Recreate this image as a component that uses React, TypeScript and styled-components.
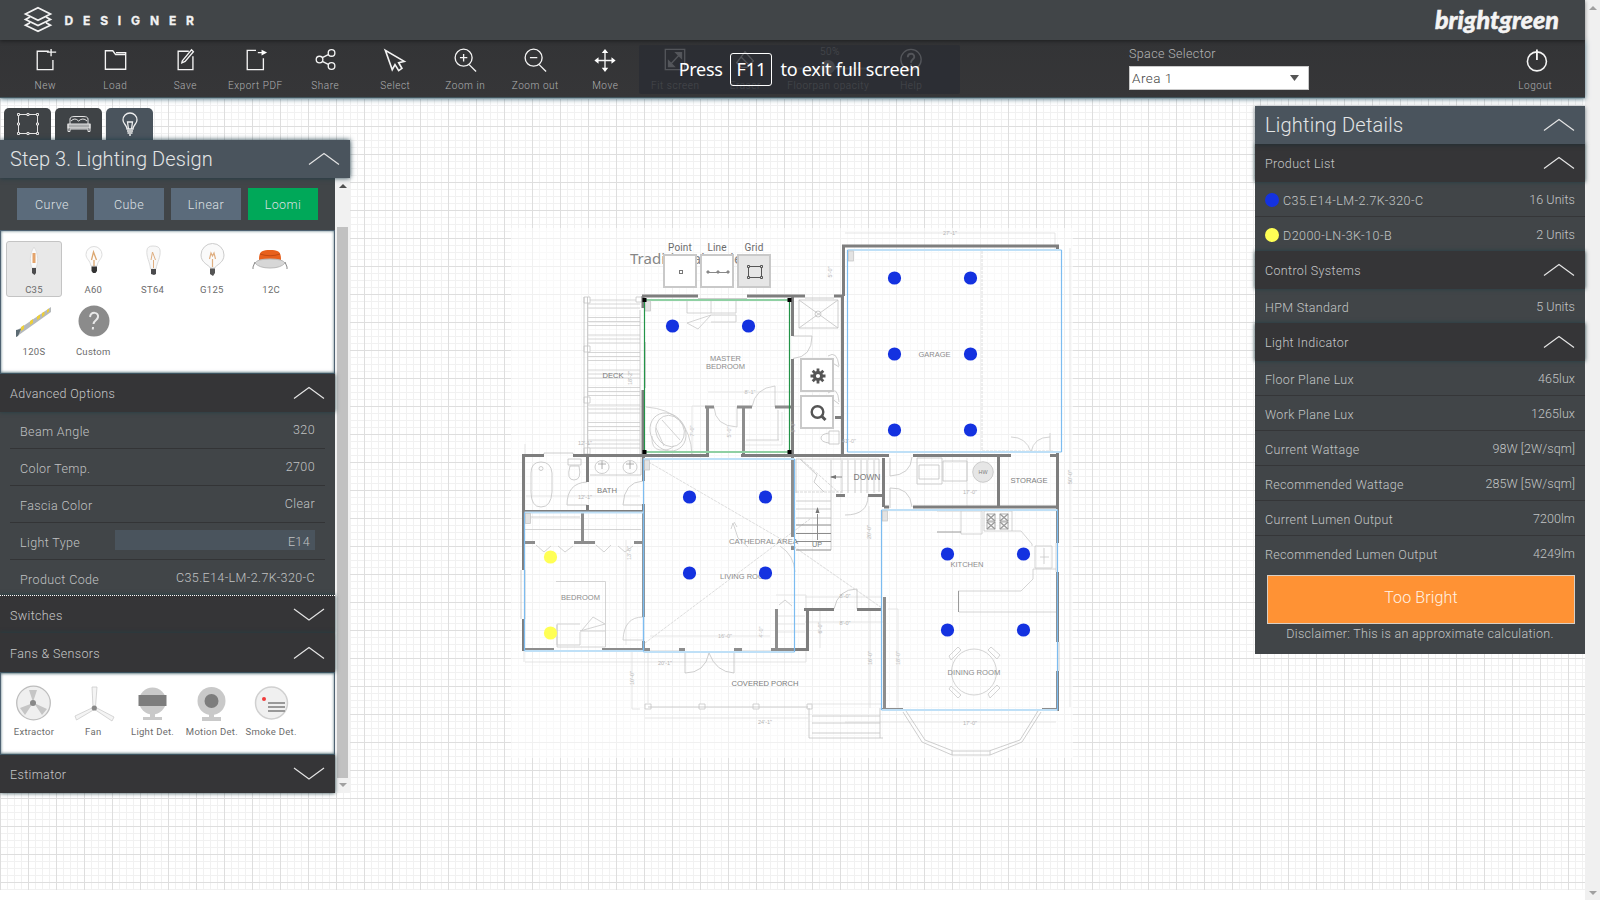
import React from "react";
import styled, { createGlobalStyle } from "styled-components";

const Global = createGlobalStyle`
  * { box-sizing: border-box; }
  html, body { margin: 0; padding: 0; background: #fff; overflow: hidden; }
  body { font-family: Roboto, "Liberation Sans", sans-serif; font-weight: 300; }
  svg { display: block; overflow: visible; }
`;

const Page = styled.div`
  width: 1600px; height: 900px; display: flex; overflow: hidden; background: #fff;
`;
const Main = styled.div`
  width: 1585px; height: 900px; display: flex; flex-direction: column; position: relative;
`;
const PageScroll = styled.div`
  width: 15px; height: 900px; background: #f0f0f0; display: flex; flex-direction: column;
  justify-content: space-between; align-items: center; padding: 6px 0 5px;
`;
const Header = styled.header`
  height: 40px; flex: none; background: #414548; display: flex; justify-content: space-between;
  padding: 0 24px 0 22px; position: relative; z-index: 3; box-shadow: 0 1px 4px rgba(0,0,0,.45);
`;
const Toolbar = styled.nav`
  height: 58px; flex: none; background: linear-gradient(#333436, #363638); display: flex; padding-left: 10px;
  position: relative; z-index: 2; border-bottom: 1px solid #43565e; box-shadow: 0 1px 5px #4c7280;
`;
const Tool = styled.div<{ $w?: number }>`
  width: ${p => p.$w ?? 70}px; flex: none; display: flex; flex-direction: column; align-items: center;
  padding-top: 8px; gap: 7px; color: #b0b1b2; font-size: 10px; line-height: 14px; letter-spacing: .55px;
  font-weight: 300; white-space: nowrap; text-indent: .6px;
  svg { height: 24px; margin-left: 1px; }
  &:nth-child(n + 6) svg { margin-left: -1px; }
`;
const SpaceSelector = styled.div`
  width: 180px; margin-left: 183px; padding-top: 6px; color: #b4b5b6; font-size: 12.5px; line-height: 16px; letter-spacing: .37px;
`;
const SelectBox = styled.div`
  height: 24px; margin-top: 4px; background: #fff; border: 1px solid #c9c9c9; display: flex; align-items: center;
  justify-content: space-between; padding: 0 9px 0 2px; font-size: 13.5px; color: #444; letter-spacing: .5px;
`;
const LogoutSlot = styled.div`margin-left: 191px;`;

const FullscreenNotice = styled.div`
  position: absolute; z-index: 5; left: 639px; top: 45px; width: 321px; height: 49px; border-radius: 2px;
  background: rgba(43,45,51,.8); color: #fff; display: flex; justify-content: center; align-items: center; gap: 8px;
  font: 400 18px "Noto Sans", sans-serif; white-space: nowrap; padding-bottom: 1px;
`;
const KeyCap = styled.span`
  width: 42px; height: 33px; border: 1.5px solid #fff; border-radius: 3px; display: flex; align-items: center; justify-content: center;
  font-size: 18px;
`;
const NoticeWord = styled.span<{ $s: number }>`letter-spacing: ${p => p.$s}px;`;

const Stage = styled.main`
  height: 792px; flex: none; position: relative; display: flex; justify-content: space-between; align-items: flex-start;
  background-image:
    linear-gradient(90deg, #dedede 1px, transparent 1px),
    linear-gradient(#dedede 1px, transparent 1px),
    linear-gradient(90deg, #f1f1f1 1px, transparent 1px),
    linear-gradient(#f1f1f1 1px, transparent 1px);
  background-size: 28px 28px, 28px 28px, 7px 7px, 7px 7px;
`;
const Canvas = styled.svg`position: absolute; left: 0; top: 0;`;

const LeftPanel = styled.aside`width: 350px; padding-top: 10px; position: relative;`;
const Tabs = styled.div`display: flex; gap: 4px; padding-left: 4px;`;
const Tab = styled.div<{ $active?: boolean }>`
  width: 47px; height: 32px; border-radius: 5px 5px 0 0; background: ${p => (p.$active ? "#4a545d" : "#3f4346")};
  display: flex; justify-content: center; align-items: center;
`;
const TitleBar = styled.div<{ $shadow?: boolean }>`
  height: 38px; background: #4a545d; color: #e3e5e6; display: flex; justify-content: space-between; align-items: center;
  padding: 0 10px; font-size: 20px; letter-spacing: ${p => (p.$shadow ? ".1px" : ".22px")}; position: relative; z-index: 2;
  box-shadow: ${p => (p.$shadow ? "0 0 5px #1f3c48" : "0 1px 4px rgba(20,40,48,.6)")};
`;
const ScrollRow = styled.div`display: flex; height: 615px;`;
const ScrollBody = styled.div`width: 335px; background: #414548;`;
const ScrollTrack = styled.div`
  width: 15px; height: 615px; background: #f1f1f1; display: flex; flex-direction: column; align-items: center;
  padding: 6px 0 6px;
`;
const Thumb = styled.div`width: 11px; height: 551px; background: #c1c1c1; margin: 39px 0 5px;`;

const Families = styled.div`display: flex; gap: 7px; padding: 10px 17px; height: 52px;`;
const Family = styled.div<{ $on?: boolean }>`
  width: 70px; height: 32px; display: flex; align-items: center; justify-content: center; font-size: 12.5px; letter-spacing: .45px;
  font-weight: 300; color: #dde0e3; background: ${p => (p.$on ? "#00a859" : "#5b6b7b")};
`;
const Swatches = styled.div<{ $h: number; $top: number }>`
  height: ${p => p.$h}px; background: #fff; border: 1px solid #4f6272; padding: ${p => p.$top}px 5px 0;
  display: flex; flex-wrap: wrap; align-content: flex-start; column-gap: 3.3px; row-gap: 6px;
  box-shadow: inset 0 0 3px #53727c;
`;
const Swatch = styled.div<{ $on?: boolean }>`
  width: 56px; height: 56px; border-radius: 3px; border: 1px solid ${p => (p.$on ? "#c4c4c4" : "transparent")};
  background: ${p => (p.$on ? "#e8e8e8" : "transparent")}; display: flex; flex-direction: column; align-items: center;
  font-size: 9.5px; line-height: 12px; letter-spacing: .28px; color: #6c6c6c; white-space: nowrap; font-weight: 400;
  svg { height: 38px; margin: 0 0 4px .5px; flex: none; }
`;
const Section = styled.div<{ $h?: number; $dots?: boolean; $drop?: number }>`
  height: ${p => p.$h ?? 38}px; background: #353537; color: #c6c7c8; display: flex; align-items: center;
  justify-content: space-between; padding: ${p => p.$drop ?? 0}px 10px 0; font-size: 12.5px; letter-spacing: .35px; position: relative; z-index: 1;
  border-top: ${p => (p.$dots ? "1px dotted #fff" : "none")}; box-shadow: 0 0 4px #223f45;
`;
const Options = styled.div`padding: 0 10px; height: 183px; overflow: hidden;`;
const Option = styled.div`
  height: 37px; padding: 0 10px; border-bottom: 1px solid #333436; display: flex; justify-content: space-between;
  color: #c0c2c3; font-size: 12.5px; letter-spacing: .38px; line-height: 15px;
  & > :first-child { padding-top: 12px; }
  & > :last-child { padding-top: 10px; }
`;
const OptionSelect = styled.div`
  && { padding: 4px 5px 0 0; } width: 200px; height: 20px; margin-top: 7px; background: #4a545d; text-align: right;
`;
const RightPanel = styled.aside`
  width: 330px; height: 548px; margin-top: 8px; background: #414548; position: relative;
`;
const Row = styled.div<{ $last?: boolean }>`
  height: ${p => (p.$last ? 34 : 35)}px; border-bottom: ${p => (p.$last ? "none" : "1px solid #353638")};
  display: flex; align-items: center; justify-content: space-between; padding: 2px 10px 0; color: #c3c5c6;
  font-size: 12.5px; letter-spacing: .36px;
`;
const RowLabel = styled.span<{ $code?: boolean }>`
  display: flex; align-items: center; gap: 4px; height: 20px; letter-spacing: ${p => (p.$code ? ".46px" : ".33px")};
`;
const RowValue = styled.span`padding-bottom: 2px; letter-spacing: .08px;`;
const Dot = styled.i<{ $c: string }>`width: 14px; height: 14px; border-radius: 7px; background: ${p => p.$c};`;
const Warning = styled.div`
  margin: 5px 10px 0 12px; height: 49px; background: #ff9234; border: 1px solid #d9cfc4; color: #fff3e6;
  font-size: 16px; letter-spacing: .15px; display: flex; align-items: center; justify-content: center; padding-bottom: 4px;
`;
const Disclaimer = styled.div`text-align: center; font-size: 12.5px; letter-spacing: .31px; color: #c3c5c6; line-height: 20px;`;

const PlaceTools = styled.div`
  position: absolute; left: 663px; top: 144px; display: flex; gap: 3px; font-size: 10px; line-height: 12px; color: #6b6b6b;
  letter-spacing: .15px; font-weight: 400; text-align: center;
`;
const SideTools = styled.div`position: absolute; left: 800px; top: 260px; display: flex; flex-direction: column; gap: 3px;`;
const ToolBox = styled.div<{ $on?: boolean }>`
  width: 34px; height: 34px; border: 2px solid #c9c9c9; background: ${p => (p.$on ? "#e6e6e6" : "#fff")};
  display: flex; align-items: center; justify-content: center; padding: 1px 0 0 1px;
`;

const Chevron = ({ down }: { down?: boolean }) => (
  <svg width="32" height="14" viewBox="0 0 32 14" fill="none" stroke="#e4e4e4" strokeWidth="1.2">
    <path d={down ? "M1 1L16 12L31 1" : "M1 12.5L16 1.5L31 12.5"} />
  </svg>
);
const Arrow = ({ up, c = "#a0a0a0" }: { up?: boolean; c?: string }) => (
  <svg width="8" height="4" viewBox="0 0 8 4"><path d={up ? "M0 4L4 0L8 4Z" : "M0 0H8L4 4Z"} fill={c} /></svg>
);

const icons: Record<string, React.ReactNode> = {
  New: <path d="M16 3.5H3.5V23.5H20.5V13M14 4.5H24M18.5 1V9" />,
  Load: <path d="M1.5 23V3H9.5L12.5 7H23.5V23ZM13 5H23.5V8" />,
  Save: <><path d="M16 3.5H4.5V23.5H20.5V9" /><path d="M9 14L19 2L21 4L12 14.5L8.5 16Z" /></>,
  "Export PDF": <><path d="M13 2.5H3.5V23.5H21V11M15 5H20" /><path d="M19 2L25 5L19 8Z" fill="#fff" stroke="none" /></>,
  Share: <><circle cx="6" cy="12.5" r="3.6" /><circle cx="19" cy="5.3" r="3.6" /><circle cx="19" cy="19.5" r="3.6" /><path d="M9 10.5L16 7M9 14.5L16 18" /></>,
  Select: <path strokeWidth="1.8" d="M2.5 2.5L10 23.5L13 18L17 24.500L20.5 22L17 16L23 14.5Z" />,
  "Zoom in": <><circle cx="11.5" cy="10.500" r="9.200" /><path d="M17.500 18L25 25.500M11.5 6.500V14.500M7.5 10.500H15.5" /></>,
  "Zoom out": <><circle cx="11.5" cy="10.500" r="9.200" /><path d="M17.500 18L25 25.500M7.5 10.500H15.5" /></>,
  Move: <><path d="M13 4V22M4 13.500H22" /><path d="M13 1L16.5 5.5H9.5ZM13 26L16.5 21.500H9.500ZM1.500 13.500L6 10V17ZM24.500 13.500L20 10V17Z" fill="#fff" stroke="none" /></>,
  "Fit screen": <><path d="M2.5 1.5H23.5V23.5H2.5ZM7 19L19 6" /><path d="M14 5H20V11ZM6 14V20H12Z" fill="#fff" /></>,
  Eraser: <path d="M13 4L22 14L15 21H9L4 16ZM9 10L17 18" />,
  Help: <><circle cx="13" cy="12.5" r="11" /><path strokeWidth="2" d="M9.500 10C9.500 5 17 5 16.500 10C16 12.500 13 12 13 16M13 17.800V20" /></>,
  Logout: <><circle cx="14" cy="14.500" r="10.300" strokeWidth="1.7" /><path strokeWidth="2" d="M14 1.500V13" /></>,
};
const ToolItem = ({ name, w }: { name: string; w?: number }) => (
  <Tool $w={w}>
    <svg width="26" height="24" viewBox="0 0 26 26" fill="none" stroke="#f4f4f4" strokeWidth="1.45">{icons[name]}</svg>
    {name}
  </Tool>
);

const base = "#4b4b4d";
const lamps: [string, React.ReactNode][] = [
  ["C35", <><path d="M20 5C15 12 16 22 18 26H22C24 22 25 12 20 5Z" fill="#fafafa" stroke="#ddd" /><path d="M18.500 11H21.500V21H18.500Z" fill="#e4a46c" /><path d="M18 26H22V31L20.500 33L18 31Z" fill={base} /></>],
  ["A60", <><path d="M17 24C16 18 12 17 12 12.500A8 8 0 0 1 28 12.500C28 17 24 18 23 24Z" fill="#fcfcfc" stroke="#ddd" /><path d="M17.500 18L19.500 10L22.500 18M20 18V24" fill="none" stroke="#dba66f" strokeWidth="1.300" /><path d="M17.500 24.500H23V29L21.500 31H19L17.500 29Z" fill="#333" /></>],
  ["ST64", <><path d="M17.500 27C17 20 13 15 14 8Q14.500 4 20 4Q26.500 4 27 8C28 15 24 20 23 27Z" fill="#f8f8f8" stroke="#dcdcdc" /><path d="M18 18L19.500 10L21 14L22.500 18M20.500 18V26" fill="none" stroke="#dfae80" /><path d="M18 27H23V32L21 33L18 32Z" fill={base} /></>],
  ["G125", <><path d="M18.500 26C17 23 9 21 9 13A11.500 11.500 0 0 1 32 13C32 21 24 23 22.500 26Z" fill="#fafafa" stroke="#ccc" /><path d="M17.500 17L19 11L20.500 14L22 11L23.500 17M20.500 17V25" fill="none" stroke="#dfae80" strokeWidth="1.200" /><path d="M18 26.500H23V31L21 34L18 32Z" fill="#555" /></>],
  ["12C", <><path d="M8 18C8 10 10 8 19 8S30 10 30 18Z" fill="#e8601c" /><path d="M9 12Q19 15.500 29 12" stroke="#c24a12" fill="none" /><path d="M4 21Q6 17 19 17T34 21Q30 26 19 26T4 21Z" fill="#d7d7d7" stroke="#b9b9b9" /><path d="M4 20L2 25V27M34 20L36 25V27" stroke="#888" fill="none" /></>],
  ["120S", <><path d="M2 27L37 3V8L2 33Z" fill="#b5b9bb" /><path d="M2 26L7 25L4 32L2 33Z" fill="#5c6b73" /><path d="M7 23L10 21V25L7 27ZM16 17L19 15V19L16 21ZM23 12.500L26 10.500V14L23 16ZM28 9L30.500 7.500V11L28 13ZM33 6L35 4.500V7.500L33 9Z" fill="#ecce38" /></>],
  ["Custom", <><circle cx="20" cy="17" r="15.500" fill="#8b8b8b" /><path d="M16 13C17 7 25 8 24 13C23.500 16.500 20 16 19.500 20M19 23L18.800 25.500" fill="none" stroke="#e8e8e8" strokeWidth="2" /></>],
];
const sensors: [string, React.ReactNode][] = [
  ["Extractor", <><circle cx="20.500" cy="19" r="16.800" fill="#efefef" stroke="#bdbdbd" strokeWidth="1.300" /><path d="M20 18L16 6H24ZM20 19L7 24L12 31ZM21 19L34 25L29 31Z" fill="#c5c5c5" /><circle cx="20" cy="19" r="3" fill="#888" /></>],
  ["Fan", <><path d="M20 23L19 3H24L22.500 23ZM21 23L2 32L3.500 36L22 25ZM22 23L41 33L39 37L21 25Z" fill="#f4f4f4" stroke="#ccc" strokeWidth=".8" /><circle cx="21.300" cy="24" r="2.600" fill="#888" /></>],
  ["Light Det.", <><circle cx="20.500" cy="17" r="13.500" fill="#c9c9c9" /><path d="M6.500 11H34.500V22H6.500Z" fill="#7d7d7d" /><path d="M18 29H23V33H30V36H11V33H18Z" fill="#c9c9c9" /></>],
  ["Motion Det.", <><circle cx="20.500" cy="17" r="14" fill="#c9c9c9" /><circle cx="20.500" cy="17" r="7" fill="#7d7d7d" /><path d="M18 29H23V33H30V37H11V33H18Z" fill="#c9c9c9" /></>],
  ["Smoke Det.", <><circle cx="21.500" cy="19" r="16" fill="#f0f0f0" stroke="#d0d0d0" strokeWidth="1.500" /><path d="M18 19H35M18 23H35M18 27H35" stroke="#999" strokeWidth="1.800" /><circle cx="14" cy="15" r="2" fill="#f03b3b" /></>],
];

const walls =
  "M642 296H698M747 296H805M834 296H843M843.500 245V296M842.500 296V456M842 246H1059M1057.500 245V250M643 296V308M643 390V456M792.500 296V336M792.500 359V456" +
  "M522 455.500H544M573 455.500H709M741 455.500H889M913 455.500H1011M1050 455.500H1059M705 407H714M737 407H752M775 407H793M707.500 406V455M743.500 406V455M835 417.500H843" +
  "M523.500 454V570M523.500 619V650M587.500 455V482M587.500 505V512M523 511.500H644M643.500 455V481M643.500 504V617M643.500 641V651" +
  "M522 649.500H554M602 649.500H650M679 649.500H685M734 649.500H742M771 649.500H809M582.500 512V542M525 542.500H535M574 542.500H595M634 542.500H643" +
  "M792.500 455V537M792.500 546V550M776.500 609V649M807.500 609V651M804 609.500H834M857 609.500H882M883.500 458V507M836 495.500H845M868 495.500H883" +
  "M884 507H889M913 507H1056M998.500 456V507M1057.500 452V543M1057.500 572V642M1057.500 671V711M884.500 510V521M884.500 597V711M882 709.500H903M1042 709.500H1059";
const thin =
  "M584 297V454M587.500 297V454M640 310V455M645.500 342V388" +
  "M698 298.500H747M805 298H834M544 454V453H573V454M554 650.500H602M650 651H679M742 651H771M521 570V619M525 570V619M1056 543V572M1059 642V671" +
  "M687 300H736V313H687ZM711 300V313M736 315V322H711M687 323L711 315L698 329ZM711 315H736" +
  "M799 300H838V328H799ZM799 300L838 328M838 300L799 328M793 336H812Q812 357 793 358.500" +
  "M714 407Q715 426 737 427V407M752 407Q755 388 775 386V407M746 440H779M778 410V440" +
  "M646 407Q690 410 692 455" +
  "M829 431H839V444H829ZM829 433Q821 434 821 438T829 443" +
  "M531 473Q531 462 541 462T552 473V492Q551 507 541 507T531 492ZM568 459H581V465H568ZM570 466Q566 480 574 480T579 466Z" +
  "M590 475H641V456M587 482Q567 483 567 505H587M643 481Q624 482 623 505H643" +
  "M525 529.500H641M525 517H580M536 545L544 552L551 546M558 546L565 552L573 546M596 545L604 552L611 545M618 546L625 552L633 546" +
  "M556 581.500H605.500V647H557V624H580M557 625V645H580V632M582 630L593 617L605 624L580 631H605M643 617Q624 617 623 640H643" +
  "M685 651V673Q705 673 709 653Q716 672 734 673V651" +
  "M648 707H808M812 716H880M812 723H880M812 733H880M809 738H883M809 708V738M880 708V738" +
  "M890 458V476Q911 475 912 457M890 508V488Q910 487 912 507M917 458H942V484H917ZM919 465H939V479H919ZM943 461H967V481H943Z" +
  "M1011 437Q1026 437 1031 452Q1034 437 1050 437V452M1050 437V433" +
  "M796 459V493M800 459L817 475L814 482L824 492M831 460V493M842 460V493M848 460V493M855 460V493M861 460V493M867 460V493M874 460V493M796 459H879V492M796 501H831M796 509H831M796 518H831M831 493V550" +
  "M868 496Q868 515 845 515M834 609Q838 589 857 589V609" +
  "M961 511H982V534H961ZM984 511H1012V531H984ZM1012 531H1021L1032 544V546M1035 546H1052V568H1035ZM1056 569H1033V579L1021 591H958M959 612H1056M937 511H961" +
  "M903 712L922 742M906 711L925 740M922 742L952 755H990L1022 742L1041 712M925 740L953 751H989L1020 740L1038 711M952 751V755M990 751V755";
const dimLines =
  "M745 445H782V412M707 406H692V456M708 392H792M524 651V662M525 662H806V648M632 651V709H640M648 652V703M808 704H882M967 458V506" +
  "M776 595H806V609M777 616H805M777 624H805M777 632H805M805 597H882M805 622H885M869 506V608M870 609V708M888 609H898V710" +
  "M845 233H1055V250M1070 248V707M525 444V454M845 722H1056M645 718H808M626 540V645M526 496H640M650 636H770M820 610V648";
const dashed = "M645 460L793 546L882 608M645 643L810 519M982 251V452M982 451H1054M801 459L838 492M796 492H842";

const planLabels: [number, number, string, number, number?][] = [
  [613, 378, "DECK", 21], [725.5, 360.5, "MASTER", 31], [725.500, 369, "BEDROOM", 39], [934.500, 357, "GARAGE", 32],
  [607, 493, "BATH", 20], [580.500, 599.500, "BEDROOM", 39], [763.500, 544, "CATHEDRAL AREA", 69], [745, 579, "LIVING ROOM", 50],
  [765, 685.500, "COVERED PORCH", 67], [867, 480, "DOWN", 27, 9], [817, 546.500, "UP", 10], [1029, 482.500, "STORAGE", 37, 8],
  [967, 566.500, "KITCHEN", 33], [974, 674.500, "DINING ROOM", 53], [983, 474, "HW", 9, 6],
];
const dims: [number, number, string, number?][] = [
  [950, 235, "27'-1\""], [665, 664.500, "20'-1\""], [765, 724, "24'-1\""], [725, 638, "16'-0\""], [970, 725, "17'-0\""], [970, 494, "17'-0\""],
  [845, 624.500, "8'-0\""], [845, 598, "8'-0\""], [585, 445, "12'-1\""], [585, 498.500, "12'-1\""], [750, 394, "8'-1\""], [849, 443, "41'-0\""],
  [832, 272, "5'-0\"", 1], [632, 378, "18'-2\"", 1], [1072, 477, "50'-0\"", 1], [872, 658, "16'-0\"", 1], [900, 658, "18'-0\"", 1], [871, 532, "20'-0\"", 1],
  [763, 632, "4'-0\"", 1], [822, 628, "6'-0\"", 1], [634, 678, "10'-0\"", 1], [631, 553, "13'-0\"", 1], [731, 432, "5'-0\"", 1], [694, 431, "7'-0\"", 1], [795, 427, "5'-3\"", 1],
];
const lights: [number, number, boolean?][] = [
  [672.5, 326], [748.5, 326], [894.5, 278], [970.5, 278], [894.5, 354], [970.5, 354], [894.5, 430], [970.5, 430],
  [689.5, 497], [765.5, 497], [689.5, 573], [765.5, 573], [947.5, 554], [1023.5, 554], [947.5, 630], [1023.5, 630],
  [550.5, 557, true], [550.5, 633, true],
];
const Room = ({ x, y, r, b, c = "#7cbcf0", h = "#bfe0f7" }: { x: number; y: number; r: number; b: number; c?: string; h?: string }) => (
  <g>
    <rect x={x} y={y} width={r - x} height={b - y} fill="#fff" fillOpacity=".12" />
    <path d={`M${x} ${y}H${r}M${x} ${b}H${r}`} stroke={h} strokeWidth="2" />
    <path d={`M${x} ${y}V${b}M${r} ${y}V${b}`} stroke={c} strokeWidth="1.2" />
    <rect x={x + 1} y={y + 1} width="5" height="10" fill="#e3e3e3" stroke="#c2c2c2" strokeWidth=".7" />
  </g>
);

const FloorPlan = () => (
  <Canvas width="1585" height="792" viewBox="0 98 1585 792" fill="none" fontFamily="'Liberation Sans', sans-serif" fontWeight="400">
    <rect x="511" y="228" width="562" height="530" fill="#fff" fillOpacity=".55" />
    <text x="630" y="264" fontFamily="'Noto Sans', sans-serif" fontSize="15" fill="#868686">Traditional Style</text>
    {Array.from({ length: 9 }, (_, i) => (
      <path key={i} stroke="#cccccc" strokeWidth=".8" d={`M588 ${300 + i * 17.500}H640M588 ${304 + i * 17.500}H640M588 ${308 + i * 17.500}H640`} />
    ))}
    <path d="M584 297H590V303H584ZM584 346H590V352H584ZM584 397H590V403H584ZM584 448H590V454H584ZM636 297H642V302H636ZM645 704H651V709H645ZM699 704H705V709H699ZM753 704H759V709H753ZM807 704H812V709H807Z" stroke="#c6c6c6" strokeWidth=".8" fill="#fff" />
    <path d={dimLines} stroke="#dedede" strokeWidth=".8" />
    <path d={thin} stroke="#c2c2c2" strokeWidth=".8" />
    <path d={dashed} stroke="#cfcfcf" strokeWidth=".8" strokeDasharray="3 1" />
    <path d="M796 525H831M796 533.500H831M796 541.500H831M796 550H831M817.500 540V514M937 532H961M958.500 591V612M831 477H842" stroke="#8c8c8c" />
    <path d="M817.500 507L819.500 513H815.500ZM830 477L836 475V479Z" fill="#777" />
    <g stroke="#c2c2c2" strokeWidth=".8">
      <circle cx="818" cy="314" r="3" /><ellipse cx="670" cy="431" rx="14" ry="16" transform="rotate(-25 670 431)" />
      <ellipse cx="668" cy="432" rx="17" ry="20" transform="rotate(-35 668 432)" />
      <path d="M652 436Q651 449 660 450T674 446M662 420L680 440M656 428L664 446" />
      <circle cx="541" cy="468.500" r="2" /><ellipse cx="602" cy="467" rx="7" ry="6.500" /><ellipse cx="630" cy="467" rx="7" ry="6.500" /><path d="M602 461V469M630 461V469M598 464H606M626 464H634" stroke="#999" />
      <circle cx="983" cy="472" r="10.300" fill="#e6e6e6" />
      <ellipse cx="974" cy="672" rx="22.500" ry="23" />
      <path d="M949 656L958 647L961 650L951 660ZM988 650L991 647L1000 655L997 659ZM949 689L951 686L961 695L958 698ZM988 694L997 685L1000 688L990 698Z" />
      <path d="M733 523L738 538L748 547M733 523L731 529M734 522L737 527M780 546Q794 555 795 572" />
      <path d="M828 356Q837 350 839 366M828 393Q838 385 839 402M831 362L839 367M831 398L839 404" />
      <path d="M779 605L785 600L792 606M1044 548V564M1040 557H1049" />
    </g>
    <g stroke="#8b8b8b">
      {[987, 1000].flatMap(x => [514, 522].map(y => <React.Fragment key={`${x}${y}`}><rect x={x} y={y} width="8" height="7" strokeWidth=".8" /><path d={`M${x} ${y}L${x + 8} ${y + 7}M${x + 8} ${y}L${x} ${y + 7}`} strokeWidth="1.300" /></React.Fragment>))}
    </g>
    <path d={walls} stroke="#7e7e7e" strokeWidth="3" />
    {planLabels.map(([x, y, t, w, s], i) => (
      <text key={i} x={x - w / 2} y={y} fontSize={s ?? 7.500} fill="#7c7c7c" textLength={w} lengthAdjust="spacingAndGlyphs">{t}</text>
    ))}
    {dims.map(([x, y, t, v], i) => (
      <text key={i} x={x} y={y} fontSize="5.500" fill="#b4b4b4" textAnchor="middle" transform={v ? `rotate(-90 ${x} ${y})` : undefined}>{t}</text>
    ))}
    <Room x={847.5} y={250} r={1061.5} b={452} />
    <Room x={643.5} y={459} r={794.5} b={652} />
    <Room x={524.5} y={512.5} r={643.5} b={651} />
    <Room x={881.5} y={510} r={1057.5} b={710} />
    <Room x={644.5} y={300} r={789.5} b={452} c="#239448" h="#8fd0a3" />
    <path d="M642.500 298H646.500V302H642.500ZM787.500 298H791.500V302H787.500ZM642.500 450H646.500V454H642.500ZM787.500 450H791.500V454H787.500Z" fill="#000" />
    {lights.map(([x, y, yellow], i) => <circle key={i} cx={x} cy={y} r="6.600" fill={yellow ? "#ffff55" : "#1432e0"} />)}
  </Canvas>
);

const results: [string, string][] = [
  ["Floor Plane Lux", "465lux"], ["Work Plane Lux", "1265lux"], ["Current Wattage", "98W [2W/sqm]"],
  ["Recommended Wattage", "285W [5W/sqm]"], ["Current Lumen Output", "7200lm"], ["Recommended Lumen Output", "4249lm"],
];

export default function App() {
  return (
    <>
      <Global />
      <Page>
        <Main>
          <Header>
            <svg width="180" height="40" viewBox="22 0 180 40" fill="none">
              <path d="M38 7.800L50.500 14L38 20.200L25.500 14Z" stroke="#f2f2f2" strokeWidth="1.700" />
              <path d="M30 17L25.500 19.500L38 25.500L50.500 19.500L46 17M30 22.800L25.500 25.200L38 31.200L50.500 25.200L46 22.800" stroke="#f2f2f2" strokeWidth="1.700" />
              <text x="64.500" y="25" fill="#f2f2f2" stroke="#f2f2f2" strokeWidth=".3" fontFamily="Inter, sans-serif" fontWeight="700" fontSize="12" textLength="129.500">DESIGNER</text>
            </svg>
            <svg width="128" height="40" viewBox="0 0 128 40">
              <text x="2" y="29" fill="#f4f4f4" stroke="#f4f4f4" strokeWidth=".5" fontFamily="Lato, sans-serif" fontWeight="900" fontStyle="italic" fontSize="25" textLength="124" lengthAdjust="spacingAndGlyphs">brightgreen</text>
            </svg>
          </Header>
          <Toolbar>
            {["New", "Load", "Save", "Export PDF", "Share", "Select", "Zoom in", "Zoom out", "Move", "Fit screen", "Eraser"].map(n => <ToolItem key={n} name={n} />)}
            <Tool $w={96}>
              <svg width="80" height="24" viewBox="0 0 80 24">
                <text x="42" y="7" fontSize="10" fill="#bbb" textAnchor="middle">50%</text>
                <path d="M0 20.500H80" stroke="#888" strokeWidth="2" /><circle cx="40" cy="19" r="7" fill="#aaa" />
              </svg>
              Floorpan opacity
            </Tool>
            <ToolItem name="Help" />
            <SpaceSelector>
              Space Selector
              <SelectBox>Area 1<svg width="9" height="6" viewBox="0 0 9 6"><path d="M0 0H9L4.500 6Z" fill="#555" /></svg></SelectBox>
            </SpaceSelector>
            <LogoutSlot><ToolItem name="Logout" /></LogoutSlot>
          </Toolbar>
          <FullscreenNotice>
            <NoticeWord $s={-0.35}>Press</NoticeWord>
            <KeyCap>F11</KeyCap>
            <NoticeWord $s={-0.24}>to exit full screen</NoticeWord>
          </FullscreenNotice>
          <Stage>
            <FloorPlan />
            <PlaceTools>
              <div>Point<ToolBox><svg width="26" height="16" fill="none" stroke="#777"><rect x="11.500" y="6.500" width="3" height="3" /></svg></ToolBox></div>
              <div>Line<ToolBox><svg width="26" height="16" fill="#888" stroke="#888"><path d="M2 8.500H24" /><path d="M2 7H4V9H2ZM12 7H14V9H12ZM22 7H24V9H22Z" /></svg></ToolBox></div>
              <div>Grid<ToolBox $on><svg width="18" height="16" viewBox="0 0 18 16" fill="#e6e6e6" stroke="#555"><rect x="2.500" y="2.500" width="13" height="11" /><path d="M1.500 1.500H3.500V3.500H1.500ZM14.500 1.500H16.500V3.500H14.500ZM1.500 12.500H3.500V14.500H1.500ZM14.500 12.500H16.500V14.500H14.500Z" /></svg></ToolBox></div>
            </PlaceTools>
            <SideTools>
              <ToolBox><svg width="16" height="16" viewBox="0 0 16 16" stroke="#555"><g strokeWidth="2.800"><path d="M8 .5V15.500M.5 8H15.500M2.700 2.700L13.300 13.300M13.300 2.700L2.700 13.300" /></g><circle cx="8" cy="8" r="3.600" fill="#fff" strokeWidth="3" /></svg></ToolBox>
              <ToolBox><svg width="18" height="18" viewBox="0 0 18 18" fill="none" stroke="#555"><circle cx="8.500" cy="8" r="5.800" strokeWidth="2.400" /><path d="M12.500 12L16.500 16" strokeWidth="3" /></svg></ToolBox>
            </SideTools>
            <LeftPanel>
              <Tabs>
                <Tab><svg width="24" height="24" viewBox="0 0 24 24" fill="#3f4346" stroke="#e4e4e4"><rect x="2.500" y="2.500" width="19" height="19" /><path d="M1.500 1.500H3.500V3.500H1.500ZM11 1.500H13V3.500H11ZM20.500 1.500H22.500V3.500H20.500ZM1.500 11H3.500V13H1.500ZM20.500 11H22.500V13H20.500ZM1.500 20.500H3.500V22.500H1.500ZM11 20.500H13V22.500H11ZM20.500 20.500H22.500V22.500H20.500Z" /></svg></Tab>
                <Tab><svg width="24" height="18" viewBox="0 0 24 18" fill="none" stroke="#e4e4e4"><path d="M3 9V4Q3 1.500 8 1.500H16Q21 1.500 21 4V9M4 6Q8 2 11.500 6Q16 2 20 6" /><rect x="1" y="9" width="22" height="4" fill="#a9abac" /><path d="M1 9V16.500H3V14H21V16.500H23V9" /></svg></Tab>
                <Tab $active><svg width="18" height="24" viewBox="0 0 18 24" fill="none" stroke="#eee" strokeWidth="1.300"><path d="M6 17C6 13 2 12 2 8A7 7 0 0 1 16 8C16 12 12 13 12 17Z" /><path d="M7.500 17L6.500 10H11.500L10.500 17M6 19H12M6.500 21H11.500M8 23H10" /></svg></Tab>
              </Tabs>
              <TitleBar $shadow>Step 3. Lighting Design<Chevron /></TitleBar>
              <ScrollRow>
                <ScrollBody>
                  <Families><Family>Curve</Family><Family>Cube</Family><Family>Linear</Family><Family $on>Loomi</Family></Families>
                  <Swatches $h={144} $top={10}>
                    {lamps.map(([n, d], i) => <Swatch key={n} $on={i === 0}><svg width="40" height="38" viewBox="0 0 40 38">{d}</svg>{n}</Swatch>)}
                  </Swatches>
                  <Section>Advanced Options<Chevron /></Section>
                  <Options>
                    <Option><span>Beam Angle</span><span>320</span></Option>
                    <Option><span>Color Temp.</span><span>2700</span></Option>
                    <Option><span>Fascia Color</span><span>Clear</span></Option>
                    <Option><span>Light Type</span><OptionSelect>E14</OptionSelect></Option>
                    <Option><span>Product Code</span><span>C35.E14-LM-2.7K-320-C</span></Option>
                  </Options>
                  <Section $dots $drop={1}>Switches<Chevron down /></Section>
                  <Section $h={39} $drop={1}>Fans &amp; Sensors<Chevron /></Section>
                  <Swatches $h={83} $top={10}>
                    {sensors.map(([n, d]) => <Swatch key={n}><svg width="42" height="38" viewBox="0 0 42 38">{d}</svg>{n}</Swatch>)}
                  </Swatches>
                  <Section>Estimator<Chevron down /></Section>
                </ScrollBody>
                <ScrollTrack><Arrow up c="#505050" /><Thumb /><Arrow /></ScrollTrack>
              </ScrollRow>
            </LeftPanel>
            <RightPanel>
              <TitleBar>Lighting Details<Chevron /></TitleBar>
              <Section>Product List<Chevron /></Section>
              <Row><RowLabel $code><Dot $c="#1432e0" />C35.E14-LM-2.7K-320-C</RowLabel><RowValue>16 Units</RowValue></Row>
              <Row $last><RowLabel $code><Dot $c="#ffff55" />D2000-LN-3K-10-B</RowLabel><RowValue>2 Units</RowValue></Row>
              <Section>Control Systems<Chevron /></Section>
              <Row $last><RowLabel>HPM Standard</RowLabel><RowValue>5 Units</RowValue></Row>
              <Section>Light Indicator<Chevron /></Section>
              {results.map(([l, v], i) => <Row key={l} $last={i === 5}><RowLabel>{l}</RowLabel><RowValue>{v}</RowValue></Row>)}
              <Warning>Too Bright</Warning>
              <Disclaimer>Disclaimer: This is an approximate calculation.</Disclaimer>
            </RightPanel>
          </Stage>
        </Main>
        <PageScroll><Arrow up /><Arrow /></PageScroll>
      </Page>
    </>
  );
}
